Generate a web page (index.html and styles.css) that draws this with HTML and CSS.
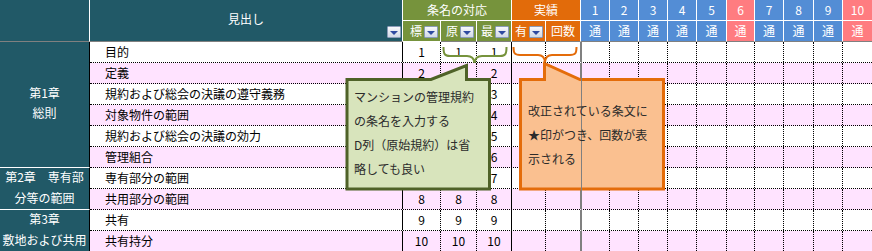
FILE: index.html
```html
<!DOCTYPE html>
<html lang="ja">
<head>
    <meta charset="UTF-8">
    <title>条名の対応</title>
    <link rel="stylesheet" href="styles.css">
</head>
<body>
<div class="sheet">
    <div class="chap-col">
        <div class="chap-head"></div>
        <div class="chap big">第1章<br>総則</div>
        <div class="chap">第2章　専有部<br>分等の範囲</div>
        <div class="chap">第3章<br>敷地および共用</div>
    </div>
    <div class="main">
        <div class="head">
            <div class="h midashi"><span class="lbl">見出し</span><span class="dd"></span></div>
            <div class="h g span3">条名の対応</div>
            <div class="h o span2">実績</div>
            <div class="h b">1</div>
            <div class="h b">2</div>
            <div class="h b">3</div>
            <div class="h b">4</div>
            <div class="h b">5</div>
            <div class="h r">6</div>
            <div class="h b">7</div>
            <div class="h b">8</div>
            <div class="h b">9</div>
            <div class="h r last">10</div>
            <div class="h g sub">標<span class="dd"></span></div>
            <div class="h g sub">原<span class="dd"></span></div>
            <div class="h g sub">最<span class="dd"></span></div>
            <div class="h o sub">有<span class="dd"></span></div>
            <div class="h o">回数</div>
            <div class="h b">通</div>
            <div class="h b">通</div>
            <div class="h b">通</div>
            <div class="h b">通</div>
            <div class="h b">通</div>
            <div class="h r">通</div>
            <div class="h b">通</div>
            <div class="h b">通</div>
            <div class="h b">通</div>
            <div class="h r last">通</div>
        </div>

        <div class="row">
            <div class="c t">目的</div><div class="c n">1</div><div class="c n">1</div><div class="c n e">1</div><div class="c"></div><div class="c f"></div>
            <div class="c"></div><div class="c"></div><div class="c"></div><div class="c"></div><div class="c"></div><div class="c"></div><div class="c"></div><div class="c"></div><div class="c"></div><div class="c last"></div>
        </div>
        <div class="row pink">
            <div class="c t">定義</div><div class="c n">2</div><div class="c n"></div><div class="c n e">2</div><div class="c"></div><div class="c f"></div>
            <div class="c"></div><div class="c"></div><div class="c"></div><div class="c"></div><div class="c"></div><div class="c"></div><div class="c"></div><div class="c"></div><div class="c"></div><div class="c last"></div>
        </div>
        <!-- 3〜7行目の標・原は吹き出しの下に隠れる -->
        <div class="row">
            <div class="c t">規約および総会の決議の遵守義務</div><div class="c n"></div><div class="c n"></div><div class="c n e">3</div><div class="c"></div><div class="c f"></div>
            <div class="c"></div><div class="c"></div><div class="c"></div><div class="c"></div><div class="c"></div><div class="c"></div><div class="c"></div><div class="c"></div><div class="c"></div><div class="c last"></div>
        </div>
        <div class="row pink">
            <div class="c t">対象物件の範囲</div><div class="c n"></div><div class="c n"></div><div class="c n e">4</div><div class="c"></div><div class="c f"></div>
            <div class="c"></div><div class="c"></div><div class="c"></div><div class="c"></div><div class="c"></div><div class="c"></div><div class="c"></div><div class="c"></div><div class="c"></div><div class="c last"></div>
        </div>
        <div class="row">
            <div class="c t">規約および総会の決議の効力</div><div class="c n"></div><div class="c n"></div><div class="c n e">5</div><div class="c"></div><div class="c f"></div>
            <div class="c"></div><div class="c"></div><div class="c"></div><div class="c"></div><div class="c"></div><div class="c"></div><div class="c"></div><div class="c"></div><div class="c"></div><div class="c last"></div>
        </div>
        <div class="row pink">
            <div class="c t">管理組合</div><div class="c n"></div><div class="c n"></div><div class="c n e">6</div><div class="c"></div><div class="c f"></div>
            <div class="c"></div><div class="c"></div><div class="c"></div><div class="c"></div><div class="c"></div><div class="c"></div><div class="c"></div><div class="c"></div><div class="c"></div><div class="c last"></div>
        </div>
        <div class="row">
            <div class="c t">専有部分の範囲</div><div class="c n"></div><div class="c n"></div><div class="c n e">7</div><div class="c"></div><div class="c f"></div>
            <div class="c"></div><div class="c"></div><div class="c"></div><div class="c"></div><div class="c"></div><div class="c"></div><div class="c"></div><div class="c"></div><div class="c"></div><div class="c last"></div>
        </div>
        <div class="row pink">
            <div class="c t">共用部分の範囲</div><div class="c n">8</div><div class="c n">8</div><div class="c n e">8</div><div class="c"></div><div class="c f"></div>
            <div class="c"></div><div class="c"></div><div class="c"></div><div class="c"></div><div class="c"></div><div class="c"></div><div class="c"></div><div class="c"></div><div class="c"></div><div class="c last"></div>
        </div>
        <div class="row">
            <div class="c t">共有</div><div class="c n">9</div><div class="c n">9</div><div class="c n e">9</div><div class="c"></div><div class="c f"></div>
            <div class="c"></div><div class="c"></div><div class="c"></div><div class="c"></div><div class="c"></div><div class="c"></div><div class="c"></div><div class="c"></div><div class="c"></div><div class="c last"></div>
        </div>
        <div class="row pink">
            <div class="c t">共有持分</div><div class="c n">10</div><div class="c n">10</div><div class="c n e">10</div><div class="c"></div><div class="c f"></div>
            <div class="c"></div><div class="c"></div><div class="c"></div><div class="c"></div><div class="c"></div><div class="c"></div><div class="c"></div><div class="c"></div><div class="c"></div><div class="c last"></div>
        </div>
    </div>

    <!-- 吹き出し -->
    <svg class="over" width="872" height="251" viewBox="0 0 872 251">
        <path d="M443.5,47 C443.5,54 444.5,56 450,56 L467,56 C472,56 474,58 474.5,63 C475,58 477,56 482,56 L500,56 C505.5,56 506.5,54 506.5,47" fill="none" stroke="#76933c" stroke-width="2"/>
        <path d="M513.5,47 C513.5,53 514.5,55 520,55 L538,55 C542.5,55 544.5,57 545,62 C545.5,57 547.5,55 552,55 L570,55 C575.5,55 576.5,53 576.5,47" fill="none" stroke="#e46c0a" stroke-width="2"/>
        <polygon points="347,79.5 431,79.5 466.5,65.5 466.5,79.5 489.5,79.5 489.5,189 347,189" fill="#d8e4bc" stroke="#4f6228" stroke-width="3"/>
        <polygon points="520.5,79.5 544.5,79.5 544.5,63.5 580,79.5 663.5,79.5 663.5,189 520.5,189" fill="#fac090" stroke="#e46c0a" stroke-width="3"/>
        <line x1="581.5" y1="42" x2="581.5" y2="251" stroke="#808080" stroke-width="1"/>
    </svg>
    <div class="note note-green">マンションの管理規約<br>の条名を入力する<br>D列（原始規約）は省<br>略しても良い</div>
    <div class="note note-orange">改正されている条文に<br>★印がつき、回数が表<br>示される</div>
</div>
</body>
</html>
```

FILE: styles.css
```css
*{margin:0;padding:0;box-sizing:border-box}
body{
    background:#fff;
    font-family:"Noto Sans CJK JP","Liberation Sans",sans-serif;
    font-size:12px;
    color:#000;
}
.sheet{
    position:relative;
    display:flex;
    width:872px;
    height:251px;
    overflow:hidden;
}
/*章の列*/
.chap-col{
    width:90px;
    flex:none;
    background:#215967;
    color:#fff;
}
.chap-head{
    height:42px;
    border-right:1px solid #fff;
    border-bottom:1px solid #808080;
}
.chap{
    height:42px;
    display:flex;
    align-items:center;
    justify-content:center;
    text-align:center;
    line-height:21px;
    padding-bottom:3px;
    border-right:1px solid #000;
    border-bottom:1px solid #fff;
    white-space:nowrap;
}
.chap.big{height:126px;line-height:20px;padding-bottom:4px}
/*見出し部分*/
.main{width:782px;flex:none}
.head,.row{
    display:grid;
    grid-template-columns:313px 38px 36px 35px 34px 35px 29px 29px 29px 29px 30px 28px 29px 30px 29px 29px;
}
.head{grid-template-rows:21px 21px}
.h{
    display:flex;
    align-items:center;
    justify-content:center;
    color:#fff;
    border-right:1px solid #fff;
    border-bottom:1px solid #fff;
    line-height:20px;
}
.head .h:nth-child(n+15){border-bottom-color:#808080}
.h.last{border-right:none}
.h.midashi{
    grid-row:1 / 3;
    display:grid;
    grid-template:1fr / 1fr;
    justify-content:stretch;
    align-items:stretch;
    background:#215967;
    border-bottom-color:#808080;
}
.midashi .lbl{grid-area:1/1;align-self:center;justify-self:center;padding-bottom:4px}
.midashi .dd{grid-area:1/1;align-self:end;justify-self:end;margin:0 1px 3px 0}
.span3{grid-column:span 3}
.span2{grid-column:span 2}
.g{background:#76933c}
.o{background:#e26b0a}
.b{background:#538dd5}
.r{background:#ff7c80}
.h.sub{justify-content:flex-end;gap:2px;padding-right:2px}
.h.sub .dd{align-self:flex-end;margin-bottom:3px}
.dd{
    width:14px;
    height:12px;
    flex:none;
    display:flex;
    align-items:center;
    justify-content:center;
    border:1px solid #8b9cb9;
    border-radius:1px;
    background:linear-gradient(#f7f8fb,#d2d9e6);
}
.dd:after{
    content:'';
    width:0;
    height:0;
    border-left:4px solid transparent;
    border-right:4px solid transparent;
    border-top:4px solid #2f4aa0;
    margin-top:1px;
}
/*表の本体*/
.row{
    height:21px;
    border-bottom:1px dotted #000;
    background:#fff;
}
.row.pink{background:#ffe3ff}
.c{
    border-right:1px dotted #000;
    line-height:20px;
    white-space:nowrap;
    overflow:hidden;
}
.c.t{padding-left:15px;border-right:1px solid #000}
.c.n{text-align:center}
.c.e{border-right:1px solid #000}
.c.f{border-right:1px solid #808080}
.c.last{border-right:none}
/*吹き出し*/
.over{position:absolute;left:0;top:0;pointer-events:none}
.note{
    position:absolute;
    line-height:24px;
    color:#2b2b2b;
    white-space:nowrap;
}
.note-green{left:354px;top:85px}
.note-orange{left:528px;top:99px}
```
